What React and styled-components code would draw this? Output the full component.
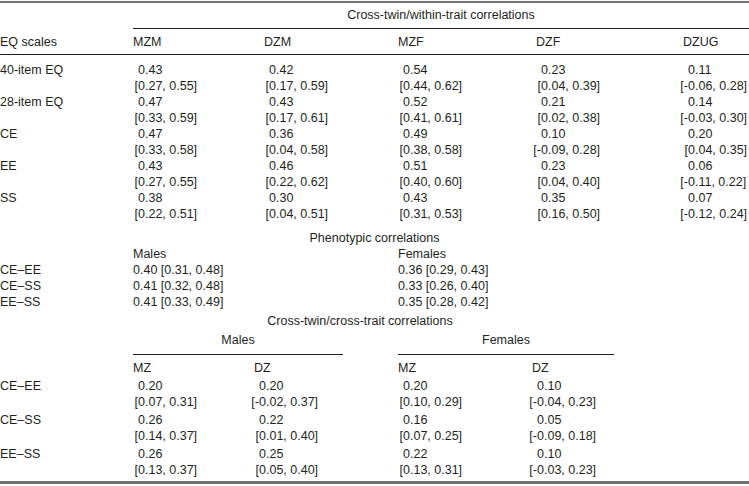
import styled, { createGlobalStyle } from "styled-components";

const GlobalStyle = createGlobalStyle`
  body {
    margin: 0;
    background: #ffffff;
  }
`;

const within = [
  { label: "40-item EQ", cells: [["0.43", "0.27, 0.55"], ["0.42", "0.17, 0.59"], ["0.54", "0.44, 0.62"], ["0.23", "0.04, 0.39"], ["0.11", "-0.06, 0.28"]] },
  { label: "28-item EQ", cells: [["0.47", "0.33, 0.59"], ["0.43", "0.17, 0.61"], ["0.52", "0.41, 0.61"], ["0.21", "0.02, 0.38"], ["0.14", "-0.03, 0.30"]] },
  { label: "CE", cells: [["0.47", "0.33, 0.58"], ["0.36", "0.04, 0.58"], ["0.49", "0.38, 0.58"], ["0.10", "-0.09, 0.28"], ["0.20", "0.04, 0.35"]] },
  { label: "EE", cells: [["0.43", "0.27, 0.55"], ["0.46", "0.22, 0.62"], ["0.51", "0.40, 0.60"], ["0.23", "0.04, 0.40"], ["0.06", "-0.11, 0.22"]] },
  { label: "SS", cells: [["0.38", "0.22, 0.51"], ["0.30", "0.04, 0.51"], ["0.43", "0.31, 0.53"], ["0.35", "0.16, 0.50"], ["0.07", "-0.12, 0.24"]] },
];

const phenotypic = [
  { label: "CE–EE", males: "0.40 [0.31, 0.48]", females: "0.36 [0.29, 0.43]" },
  { label: "CE–SS", males: "0.41 [0.32, 0.48]", females: "0.33 [0.26, 0.40]" },
  { label: "EE–SS", males: "0.41 [0.33, 0.49]", females: "0.35 [0.28, 0.42]" },
];

const crossTrait = [
  { label: "CE–EE", cells: [["0.20", "0.07, 0.31"], ["0.20", "-0.02, 0.37"], ["0.20", "0.10, 0.29"], ["0.10", "-0.04, 0.23"]] },
  { label: "CE–SS", cells: [["0.26", "0.14, 0.37"], ["0.22", "0.01, 0.40"], ["0.16", "0.07, 0.25"], ["0.05", "-0.09, 0.18"]] },
  { label: "EE–SS", cells: [["0.26", "0.13, 0.37"], ["0.25", "0.05, 0.40"], ["0.22", "0.13, 0.31"], ["0.10", "-0.03, 0.23"]] },
];

const Page = styled.div`
  width: 749px;
  padding-top: 1px;
  font-family: "Liberation Sans", Arial, sans-serif;
  font-size: 12.5px;
  line-height: 16px;
  color: #231f20;
`;

const Rule = styled.div`
  height: ${({ $thick }) => $thick}px;
  background: #727272;
  margin-top: ${({ $gap }) => $gap || 0}px;
`;

const SpanTitle = styled.div`
  margin-left: ${({ $left }) => $left || 0}px;
  width: ${({ $width }) => ($width ? `${$width}px` : "auto")};
  text-align: center;
  padding-top: ${({ $top }) => $top || 0}px;
  padding-bottom: ${({ $bottom }) => $bottom || 0}px;
  border-bottom: ${({ $ruled }) => ($ruled ? "1px solid #231f20" : "none")};
`;

const Grid = styled.div`
  display: grid;
  grid-template-columns: ${({ $cols }) => $cols};
  row-gap: ${({ $rowGap }) => $rowGap || 0}px;
  padding-top: ${({ $top }) => $top || 0}px;
  padding-bottom: ${({ $bottom }) => $bottom || 0}px;
  border-bottom: ${({ $ruled }) => ($ruled ? "1px solid #231f20" : "none")};
  white-space: nowrap;
`;

const Group = styled.div`
  width: ${({ $width }) => $width}px;
  text-align: center;
  padding-top: 3px;
  padding-bottom: 6px;
  border-bottom: 1px solid #231f20;
`;

const Cell = styled.div`
  display: flex;
  flex-direction: column;
`;

const Line = styled.span`
  display: flex;
`;

// keeps the first digit of estimate and interval in one column,
// brackets and minus signs hang out to the left
const Lead = styled.span`
  display: inline-flex;
  justify-content: flex-end;
  width: 5px;
  flex: none;
`;

function Estimate({ value, ci }) {
  const neg = ci.startsWith("-");
  return (
    <Cell>
      <Line>
        <Lead />
        {value}
      </Line>
      <Line>
        <Lead>{neg ? "[-" : "["}</Lead>
        {(neg ? ci.slice(1) : ci) + "]"}
      </Line>
    </Cell>
  );
}

const TOP_COLS = "133px 131px 134px 138px 147px 1fr";
const LOW_COLS = "133px 121px 144px 134px 1fr";

export default function App() {
  return (
    <Page>
      <GlobalStyle />
      <Rule $thick={2} />

      <SpanTitle $left={133} $top={4} $bottom={5} $ruled>
        Cross-twin/within-trait correlations
      </SpanTitle>
      <Grid $cols={TOP_COLS} $top={5} $bottom={4} $ruled>
        <div>EQ scales</div>
        <div>MZM</div>
        <div>DZM</div>
        <div>MZF</div>
        <div>DZF</div>
        <div>DZUG</div>
      </Grid>
      <Grid $cols={TOP_COLS} $top={7}>
        {within.map((row) => (
          <Row key={row.label} label={row.label} cells={row.cells} />
        ))}
      </Grid>

      <SpanTitle $top={8}>Phenotypic correlations</SpanTitle>
      <Grid $cols="133px 265px 1fr">
        <div />
        <div>Males</div>
        <div>Females</div>
        {phenotypic.map((row) => (
          <PhenoRow key={row.label} {...row} />
        ))}
      </Grid>

      <SpanTitle $width={720} $top={3}>
        Cross-twin/cross-trait correlations
      </SpanTitle>
      <Grid $cols="133px 265px 1fr">
        <div />
        <Group $width={210}>Males</Group>
        <Group $width={216}>Females</Group>
      </Grid>
      <Grid $cols={LOW_COLS} $top={5} $rowGap={2}>
        <div />
        <div>MZ</div>
        <div>DZ</div>
        <div>MZ</div>
        <div>DZ</div>
        {crossTrait.map((row) => (
          <Row key={row.label} label={row.label} cells={row.cells} />
        ))}
      </Grid>

      <Rule $thick={3} $gap={3} />
    </Page>
  );
}

function Row({ label, cells }) {
  return (
    <>
      <div>{label}</div>
      {cells.map(([value, ci], i) => (
        <Estimate key={i} value={value} ci={ci} />
      ))}
    </>
  );
}

function PhenoRow({ label, males, females }) {
  return (
    <>
      <div>{label}</div>
      <div>{males}</div>
      <div>{females}</div>
    </>
  );
}
